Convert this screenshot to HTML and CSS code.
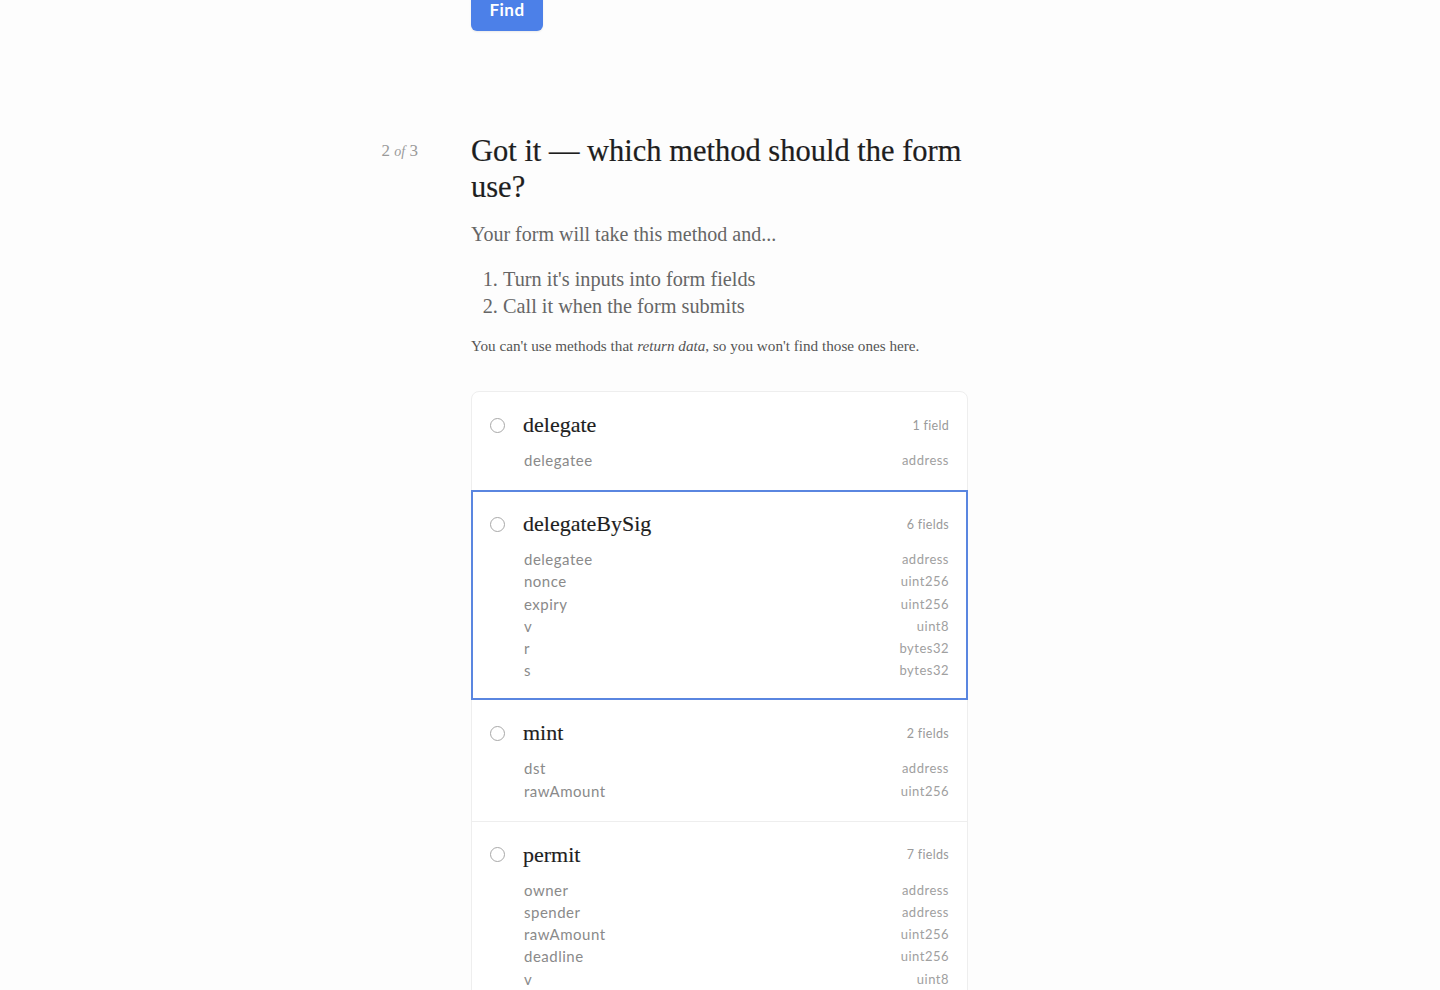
FILE: index.html
```html
<!DOCTYPE html>
<html>
<head>
<meta charset="utf-8">
<link rel="stylesheet" href="styles.css">
</head>
<body>
<div class="page">
  <div class="top">
    <button class="find">Find</button>
  </div>
  <section class="step">
    <div class="step-label">2 <i>of</i> 3</div>
    <div class="step-body">
      <h1 class="title">Got it — which method should the form use?</h1>
      <p class="lead">Your form will take this method and...</p>
      <ol class="steps">
        <li>Turn it's inputs into form fields</li>
        <li>Call it when the form submits</li>
      </ol>
      <p class="note">You can't use methods that <i>return data</i>, so you won't find those ones here.</p>

      <div class="methods">
        <div class="method first">
          <div class="method-head"><span class="radio"></span><span class="method-name">delegate</span><span class="count">1 field</span></div>
          <div class="fields">
            <div class="field"><span>delegatee</span><span class="type">address</span></div>
          </div>
        </div>
        <div class="method selected">
          <div class="method-head"><span class="radio"></span><span class="method-name">delegateBySig</span><span class="count">6 fields</span></div>
          <div class="fields">
            <div class="field"><span>delegatee</span><span class="type">address</span></div>
            <div class="field"><span>nonce</span><span class="type">uint256</span></div>
            <div class="field"><span>expiry</span><span class="type">uint256</span></div>
            <div class="field"><span>v</span><span class="type">uint8</span></div>
            <div class="field"><span>r</span><span class="type">bytes32</span></div>
            <div class="field"><span>s</span><span class="type">bytes32</span></div>
          </div>
        </div>
        <div class="method">
          <div class="method-head"><span class="radio"></span><span class="method-name">mint</span><span class="count">2 fields</span></div>
          <div class="fields">
            <div class="field"><span>dst</span><span class="type">address</span></div>
            <div class="field"><span>rawAmount</span><span class="type">uint256</span></div>
          </div>
        </div>
        <div class="method">
          <div class="method-head"><span class="radio"></span><span class="method-name">permit</span><span class="count">7 fields</span></div>
          <div class="fields">
            <div class="field"><span>owner</span><span class="type">address</span></div>
            <div class="field"><span>spender</span><span class="type">address</span></div>
            <div class="field"><span>rawAmount</span><span class="type">uint256</span></div>
            <div class="field"><span>deadline</span><span class="type">uint256</span></div>
            <div class="field"><span>v</span><span class="type">uint8</span></div>
            <div class="field"><span>r</span><span class="type">bytes32</span></div>
            <div class="field"><span>s</span><span class="type">bytes32</span></div>
          </div>
        </div>
      </div>
    </div>
  </section>
</div>
</body>
</html>
```

FILE: styles.css
```css
html, body {
  margin: 0;
  padding: 0;
  background: #fdfdfd;
  overflow: hidden;
}
body {
  font-family: "Liberation Serif", serif;
  color: #222;
}
.page {
  height: 990px;
  overflow: hidden;
  padding-right: 1px;
}
.top {
  display: grid;
  grid-template-columns: 1fr 497px 1fr;
}
.find {
  grid-column: 2;
  justify-self: start;
  margin-top: -13px;
  height: 44px;
  width: 72px;
  border: none;
  border-radius: 6px;
  background: #4c80e8;
  color: #fff;
  font-family: "Lato", sans-serif;
  font-weight: 700;
  font-size: 17px;
  letter-spacing: 0.5px;
  padding: 0;
  box-shadow: 0 1px 2px rgba(0,0,0,0.08);
}
.step {
  display: grid;
  grid-template-columns: 1fr 497px 1fr;
  margin-top: 102px;
}
.step-label {
  grid-column: 1;
  justify-self: end;
  padding-right: 53px;
  font-size: 17px;
  line-height: 36px;
  color: #9a9a9a;
}
.step-label i {
  font-size: 14px;
}
.step-body {
  grid-column: 2;
}
.title {
  margin: 0;
  font-weight: 400;
  font-size: 30.5px;
  line-height: 36px;
  color: #1e1e1e;
  -webkit-text-stroke: 0.2px #1e1e1e;
}
.lead {
  margin: 16px 0 0;
  font-size: 20px;
  line-height: 27px;
  color: #666;
}
.steps {
  margin: 18px 0 0;
  padding-left: 32px;
  font-size: 20.3px;
  line-height: 27px;
  color: #666;
}
.note {
  margin: 16px 0 0;
  font-size: 15.2px;
  line-height: 20px;
  color: #555;
}
.methods {
  margin-top: 35px;
}
.method {
  background: #fff;
  border: 1px solid #eeeeee;
  padding: 19px 18px 19px;
  margin-top: -1px;
}
.method.first {
  border-radius: 8px 8px 0 0;
  margin-top: 0;
}
.method.selected {
  border: 2px solid #5a86e0;
  padding: 18px 17px 17px;
  position: relative;
}
.method-head {
  display: flex;
  align-items: center;
  height: 28px;
}
.radio {
  width: 13px;
  height: 13px;
  border: 1.5px solid #a8a8a8;
  border-radius: 50%;
  flex: none;
  margin-right: 18px;
}
.method-name {
  font-size: 22px;
  color: #1e1e1e;
  flex: 1;
  -webkit-text-stroke: 0.15px #1e1e1e;
}
.count {
  font-family: "Lato", sans-serif;
  font-size: 12.5px;
  color: #9a9a9a;
  letter-spacing: 0.3px;
}
.fields {
  margin-top: 10px;
  padding-left: 34px;
}
.field {
  display: flex;
  justify-content: space-between;
  font-family: "Lato", sans-serif;
  font-size: 15px;
  line-height: 22.2px;
  color: #8a8a8a;
  letter-spacing: 0.5px;
}
.field .type {
  font-size: 13px;
  color: #a0a0a0;
}
```
